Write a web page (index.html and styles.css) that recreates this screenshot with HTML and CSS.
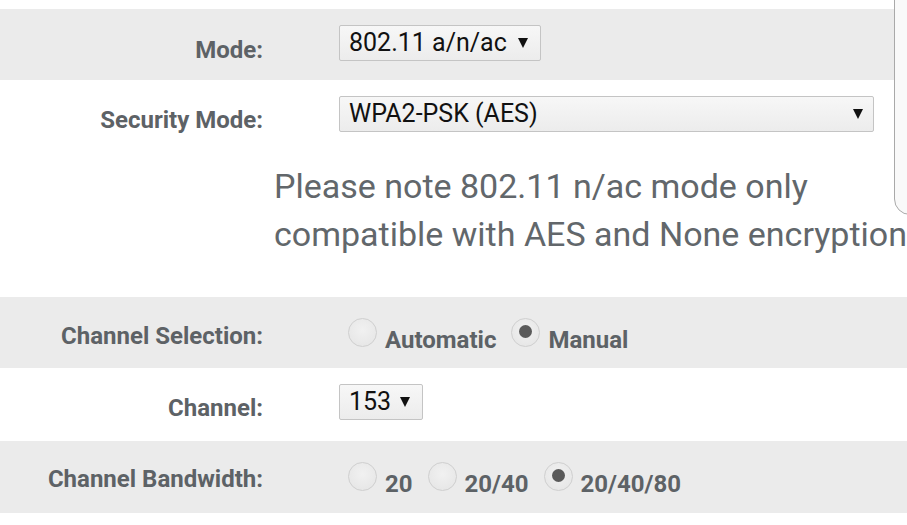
FILE: index.html
```html
<!DOCTYPE html>
<html>
<head>
<meta charset="utf-8">
<link rel="stylesheet" href="styles.css">
</head>
<body>
<div class="form">
  <div class="row gray r1">
    <div class="label">Mode:</div>
    <div class="field">
      <div class="select sel-mode"><span class="val">802.11 a/n/ac</span><svg class="arrow" width="10" height="10" viewBox="0 0 10 10"><polygon points="0,0 10,0 5,10"/></svg></div>
    </div>
  </div>
  <div class="block r2">
    <div class="row inner">
      <div class="label">Security Mode:</div>
      <div class="field">
        <div class="select sel-sec"><span class="val">WPA2-PSK (AES)</span><svg class="arrow" width="10" height="10" viewBox="0 0 10 10"><polygon points="0,0 10,0 5,10"/></svg></div>
      </div>
    </div>
    <p class="note">Please note 802.11 n/ac mode only<br>compatible with AES and None encryption</p>
  </div>
  <div class="row gray r3">
    <div class="label">Channel Selection:</div>
    <div class="field radios">
      <label class="opt"><span class="radio"></span><span class="txt">Automatic</span></label>
      <label class="opt"><span class="radio on"></span><span class="txt">Manual</span></label>
    </div>
  </div>
  <div class="row r4">
    <div class="label">Channel:</div>
    <div class="field">
      <div class="select sel-ch"><span class="val">153</span><svg class="arrow" width="10" height="10" viewBox="0 0 10 10"><polygon points="0,0 10,0 5,10"/></svg></div>
    </div>
  </div>
  <div class="row gray r5">
    <div class="label">Channel Bandwidth:</div>
    <div class="field radios">
      <label class="opt"><span class="radio"></span><span class="txt">20</span></label>
      <label class="opt"><span class="radio"></span><span class="txt">20/40</span></label>
      <label class="opt"><span class="radio on"></span><span class="txt">20/40/80</span></label>
    </div>
  </div>
</div>
<div class="panel"></div>
</body>
</html>
```
FILE: styles.css
```css
html, body {
  margin: 0;
  padding: 0;
  background: #ffffff;
  overflow: hidden;
  width: 907px;
  height: 525px;
}
body {
  font-family: Roboto, "Noto Sans", sans-serif;
  padding-top: 9px;
  box-sizing: border-box;
  position: relative;
}
.form {
  width: 907px;
}
.row {
  display: flex;
  align-items: flex-start;
}
.gray {
  background: #ebebeb;
}
.label {
  width: 263px;
  flex: none;
  text-align: right;
  font-weight: 700;
  font-size: 24px;
  line-height: 28px;
  color: #5d6266;
  white-space: nowrap;
}
.field {
  margin-left: 76px;
  display: flex;
  align-items: flex-start;
}
.r1 { height: 71px; }
.r1 .label { padding-top: 27px; }
.r1 .field { padding-top: 16px; }
.r2 { height: 217px; }
.r2 .inner .label { padding-top: 26px; }
.r2 .inner .field { padding-top: 16px; }
.r3 { height: 71px; }
.r3 .label { padding-top: 25px; }
.r4 { height: 73px; }
.r4 .label { padding-top: 26px; }
.r4 .field { padding-top: 16px; }
.r5 { height: 72px; }
.r5 .label { padding-top: 24px; }

.select {
  box-sizing: border-box;
  height: 36px;
  border: 1px solid #c4c4c4;
  border-radius: 2px;
  background: linear-gradient(#f7f7f7, #ececec);
  display: flex;
  align-items: center;
  justify-content: space-between;
  padding: 0 12px 0 9px;
  color: #111;
  font-size: 25px;
}
.select .val {
  line-height: 28px;
  white-space: nowrap;
}
.select .arrow {
  fill: #111;
  flex: none;
}
.sel-mode { width: 202px; }
.sel-sec { width: 535px; padding-right: 10px; }
.sel-ch { width: 84px; }

.note {
  margin: 0 0 0 274px;
  padding-top: 28px;
  font-size: 34px;
  line-height: 48px;
  color: #62676b;
  white-space: nowrap;
}

.radios {
  padding-top: 21px;
  padding-left: 9px;
  gap: 15px;
}
.opt {
  display: flex;
  align-items: flex-end;
  font-weight: 700;
  font-size: 24px;
  color: #5d6266;
}
.radio {
  box-sizing: border-box;
  width: 29px;
  height: 29px;
  border-radius: 50%;
  border: 1px solid #cfcfcf;
  background: radial-gradient(circle at 50% 40%, #f1f1f1, #e4e4e4);
  margin-right: 8px;
  position: relative;
  flex: none;
}
.radio.on::after {
  content: "";
  position: absolute;
  left: 7px;
  top: 6px;
  width: 13px;
  height: 13px;
  border-radius: 50%;
  background: #5a5a5a;
}
.txt {
  line-height: 28px;
  margin-bottom: -7px;
}

.panel {
  position: absolute;
  left: 894px;
  top: -20px;
  width: 40px;
  height: 235px;
  box-sizing: border-box;
  border: 1px solid #a9a9a9;
  border-radius: 16px;
  background: #f9f9f9;
}
```
